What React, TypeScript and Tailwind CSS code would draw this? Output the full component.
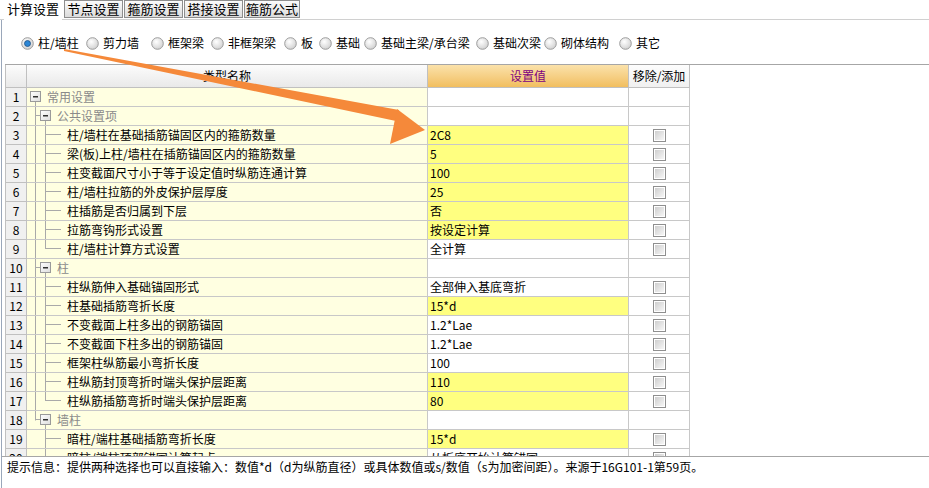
import React from 'react';

type Row = {
  n: number;
  kind: 'root' | 'group' | 'leaf';
  name: string;
  value?: string;
  yellow?: boolean;
  check?: boolean;
  outer?: boolean; // vertical line of root level continues
  last?: boolean; // last child in its group
};

const rows: Row[] = [
  { n: 1, kind: 'root', name: '常用设置' },
  { n: 2, kind: 'group', name: '公共设置项', outer: true },
  { n: 3, kind: 'leaf', name: '柱/墙柱在基础插筋锚固区内的箍筋数量', value: '2C8', yellow: true, check: true, outer: true },
  { n: 4, kind: 'leaf', name: '梁(板)上柱/墙柱在插筋锚固区内的箍筋数量', value: '5', yellow: true, check: true, outer: true },
  { n: 5, kind: 'leaf', name: '柱变截面尺寸小于等于设定值时纵筋连通计算', value: '100', yellow: true, check: true, outer: true },
  { n: 6, kind: 'leaf', name: '柱/墙柱拉筋的外皮保护层厚度', value: '25', yellow: true, check: true, outer: true },
  { n: 7, kind: 'leaf', name: '柱插筋是否归属到下层', value: '否', yellow: true, check: true, outer: true },
  { n: 8, kind: 'leaf', name: '拉筋弯钩形式设置', value: '按设定计算', yellow: true, check: true, outer: true },
  { n: 9, kind: 'leaf', name: '柱/墙柱计算方式设置', value: '全计算', check: true, outer: true, last: true },
  { n: 10, kind: 'group', name: '柱', outer: true },
  { n: 11, kind: 'leaf', name: '柱纵筋伸入基础锚固形式', value: '全部伸入基底弯折', check: true, outer: true },
  { n: 12, kind: 'leaf', name: '柱基础插筋弯折长度', value: '15*d', yellow: true, check: true, outer: true },
  { n: 13, kind: 'leaf', name: '不变截面上柱多出的钢筋锚固', value: '1.2*Lae', check: true, outer: true },
  { n: 14, kind: 'leaf', name: '不变截面下柱多出的钢筋锚固', value: '1.2*Lae', check: true, outer: true },
  { n: 15, kind: 'leaf', name: '框架柱纵筋最小弯折长度', value: '100', check: true, outer: true },
  { n: 16, kind: 'leaf', name: '柱纵筋封顶弯折时端头保护层距离', value: '110', yellow: true, check: true, outer: true },
  { n: 17, kind: 'leaf', name: '柱纵筋插筋弯折时端头保护层距离', value: '80', yellow: true, check: true, outer: true, last: true },
  { n: 18, kind: 'group', name: '墙柱', last: true },
  { n: 19, kind: 'leaf', name: '暗柱/端柱基础插筋弯折长度', value: '15*d', yellow: true, check: true },
  { n: 20, kind: 'leaf', name: '暗柱/端柱顶部锚固计算起点', value: '从板底开始计算锚固', check: true },
];

const radios = [
  { label: '柱/墙柱', w: 'w-[65px]', on: true },
  { label: '剪力墙', w: 'w-[65px]' },
  { label: '框架梁', w: 'w-[60px]' },
  { label: '非框架梁', w: 'w-[73px]' },
  { label: '板', w: 'w-[35px]' },
  { label: '基础', w: 'w-[45px]' },
  { label: '基础主梁/承台梁', w: 'w-[112px]' },
  { label: '基础次梁', w: 'w-[68px]' },
  { label: '砌体结构', w: 'w-[75px]' },
  { label: '其它', w: 'w-[60px]' },
];

const LINE = '#a9a9a9';

function Box({ x }: { x: number }) {
  return (
    <g>
      <rect x={x + 0.5} y={3.5} width={10} height={10} fill="url(#boxg)" stroke="#9a9a9a" />
      <rect x={x + 3} y={8} width={5} height={1.5} fill="#303030" />
    </g>
  );
}

function Tree({ row }: { row: Row }) {
  if (row.kind === 'root') {
    return (
      <svg width={20} height={18} className="shrink-0">
        <Box x={3} />
        <line x1={8.5} y1={14} x2={8.5} y2={18} stroke={LINE} />
      </svg>
    );
  }
  if (row.kind === 'group') {
    return (
      <svg width={30} height={18} className="shrink-0">
        <line x1={8.5} y1={0} x2={8.5} y2={row.last ? 9.5 : 18} stroke={LINE} />
        <line x1={8.5} y1={8.5} x2={13} y2={8.5} stroke={LINE} />
        <Box x={13} />
        <line x1={18.5} y1={14} x2={18.5} y2={18} stroke={LINE} />
      </svg>
    );
  }
  return (
    <svg width={40} height={18} className="shrink-0">
      {row.outer && <line x1={8.5} y1={0} x2={8.5} y2={18} stroke={LINE} />}
      <line x1={18.5} y1={0} x2={18.5} y2={row.last ? 9 : 18} stroke={LINE} />
      <line x1={18.5} y1={8.5} x2={34} y2={8.5} stroke={LINE} />
    </svg>
  );
}

function Radio({ on }: { on?: boolean }) {
  return (
    <svg width={13} height={13} className="shrink-0">
      <defs>
        <radialGradient id={on ? 'rgon' : 'rgoff'} cx="40%" cy="35%" r="70%">
          <stop offset="0%" stopColor="#ffffff" />
          <stop offset="100%" stopColor="#cfcfcf" />
        </radialGradient>
      </defs>
      <circle cx={6.5} cy={6.5} r={5.8} fill={`url(#${on ? 'rgon' : 'rgoff'})`} stroke="#9c9c9c" />
      {on && <circle cx={6.5} cy={6.5} r={3} fill="#2b86d6" stroke="#1f4f80" strokeWidth={0.8} />}
    </svg>
  );
}

function Check() {
  return (
    <div className="h-[13px] w-[13px] border border-[#8f8f8f] bg-white p-[1px]">
      <div className="h-full w-full bg-gradient-to-br from-[#cfcfcf] to-[#f6f6f6]" />
    </div>
  );
}

export default function App() {
  const tabs = ['节点设置', '箍筋设置', '搭接设置', '箍筋公式'];
  return (
    <div className="relative flex h-[488px] w-[929px] flex-col overflow-hidden bg-white font-['Noto_Sans_CJK_SC','Liberation_Sans',sans-serif] text-[12px] text-black">
      <svg width={0} height={0} className="absolute">
        <defs>
          <linearGradient id="boxg" x1="0" y1="0" x2="1" y2="1">
            <stop offset="0%" stopColor="#ffffff" />
            <stop offset="100%" stopColor="#dcdcdc" />
          </linearGradient>
        </defs>
      </svg>

      {/* Tabs */}
      <div className="flex h-[20px] shrink-0 items-end border-b border-[#d0d0d0] pl-[4px]">
        <div className="mb-[-1px] flex h-[20px] w-[58px] items-start justify-center bg-white pt-[1px] text-[13px] leading-[16px]">
          计算设置
        </div>
        {tabs.map((t, i) => (
          <div
            key={t}
            className={`${i === 0 ? 'ml-[2px]' : 'ml-[1px]'} ${i === 3 ? 'w-[56px]' : 'w-[59px]'} mb-[1px] flex h-[18px] items-center justify-center border border-[#8e8e8e] bg-gradient-to-b from-[#fbfbfb] to-[#dcdcdc] text-[13px] leading-[16px]`}
          >
            {t}
          </div>
        ))}
      </div>

      {/* Panel */}
      <div className="ml-[1px] flex min-h-0 flex-1 flex-col border-l border-[#9aa7ba]">
        {/* Radio row */}
        <div className="flex h-[44px] shrink-0 items-center pl-[19px] pt-[2px]">
          {radios.map((r) => (
            <div key={r.label} className={`${r.w} flex shrink-0 items-center gap-[4px] leading-[16px]`}>
              <Radio on={r.on} />
              <span className="whitespace-nowrap">{r.label}</span>
            </div>
          ))}
        </div>

        {/* Grid */}
        <div className="ml-[3px] flex min-h-0 flex-1 flex-col overflow-hidden border-t border-[#a6a6a6]">
          <div className="flex h-[23px] shrink-0">
            <div className="w-[22px] border-l border-r border-b border-[#c0c0c0] bg-gradient-to-b from-[#fcfcfc] to-[#e9e9e9]" />
            <div className="flex w-[401px] items-center justify-center border-r border-b border-[#c0c0c0] bg-gradient-to-b from-[#fcfcfc] to-[#e9e9e9]">
              类型名称
            </div>
            <div className="flex w-[201px] items-center justify-center border-r border-b border-[#c0c0c0] bg-gradient-to-b from-[#fbe2aa] to-[#f1be5e] text-[#800080]">
              设置值
            </div>
            <div className="flex w-[61px] items-center justify-center border-r border-b border-[#c0c0c0] bg-gradient-to-b from-[#fdfdfd] to-[#f0f0f0]">
              移除/添加
            </div>
          </div>

          {rows.map((row) => (
            <div key={row.n} className="flex h-[19px] shrink-0 leading-[18px]">
              <div className="w-[22px] border-l border-r border-b border-[#c0c0c0] bg-[#f0f0f0] text-center">
                {row.n}
              </div>
              <div className="flex w-[401px] items-center border-r border-b border-[#c8c8c8] bg-[#ffffe1]">
                <Tree row={row} />
                <span className={`whitespace-nowrap ${row.kind === 'leaf' ? 'text-black' : 'text-[#8a8a8a]'}`}>
                  {row.name}
                </span>
              </div>
              <div
                className={`w-[201px] whitespace-nowrap border-r border-b border-[#c8c8c8] pl-[2px] ${
                  row.yellow ? 'bg-[#ffff80]' : 'bg-white'
                }`}
              >
                {row.value}
              </div>
              <div className="flex w-[61px] items-center justify-center border-r border-b border-[#c8c8c8] bg-white">
                {row.check && <Check />}
              </div>
            </div>
          ))}
        </div>

        {/* Status bar */}
        <div className="relative z-10 h-[32px] shrink-0 border-t border-[#a6a6a6] bg-white pl-[5px] pt-[1px] leading-[18px]">
          提示信息：提供两种选择也可以直接输入：数值*d（d为纵筋直径）或具体数值或s/数值（s为加密间距）。来源于16G101-1第59页。
        </div>
      </div>

      {/* Annotation arrow */}
      <svg width={929} height={488} className="pointer-events-none absolute left-0 top-0 z-20">
        <polygon points="64,49 399,110 396,121 64,51" fill="#f5893a" />
        <polygon points="397,109 425,130 390,144" fill="#f5893a" />
      </svg>
    </div>
  );
}
